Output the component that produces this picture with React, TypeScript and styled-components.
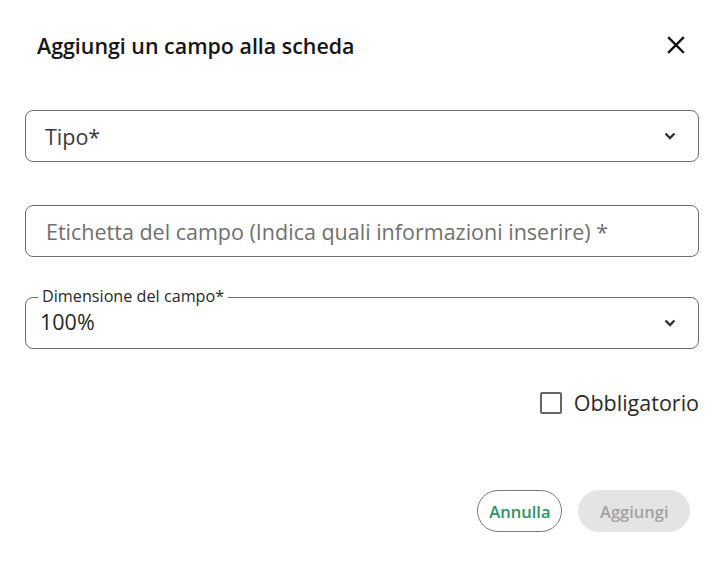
import React from 'react'
import styled, { createGlobalStyle } from 'styled-components'

// -- GLOBAL
const GlobalStyle = createGlobalStyle`
  html, body {
    margin: 0;
    padding: 0;
    background: #ffffff;
    font-family: "Open Sans", "Noto Sans", sans-serif;
    color: #1c1c1c;
  }
`

// -- ICONS
const CloseIcon = () => (
  <svg width="18" height="18" viewBox="0 0 18 18" fill="none">
    <path d="M2 2L16 16M16 2L2 16" stroke="#111" strokeWidth="2.4" strokeLinecap="square" />
  </svg>
)

const Chevron = () => (
  <svg width="12" height="8" viewBox="0 0 12 8" fill="none">
    <path d="M1.5 1.5L6 6L10.5 1.5" stroke="#333" strokeWidth="2.4" />
  </svg>
)

// -- COMPONENT
const App: React.FunctionComponent = () => {
  return (
    <>
      <GlobalStyle />
      <Dialog>
        <Header>
          <Title>Aggiungi un campo alla scheda</Title>
          <CloseButton aria-label="Chiudi"><CloseIcon /></CloseButton>
        </Header>

        <Field spacing={50}>
          <Value muted>Tipo*</Value>
          <Chevron />
        </Field>

        <Field spacing={43}>
          <Value placeholder>Etichetta del campo (Indica quali informazioni inserire) *</Value>
        </Field>

        <Field spacing={40} outlined>
          <Legend>Dimensione del campo*</Legend>
          <Value filled>100%</Value>
          <Chevron />
        </Field>

        <CheckRow>
          <CheckBox />
          <CheckLabel>Obbligatorio</CheckLabel>
        </CheckRow>

        <Actions>
          <Button>Annulla</Button>
          <Button disabled primary>Aggiungi</Button>
        </Actions>
      </Dialog>
    </>
  )
}

// -- UI
const Dialog = styled.div`
  width: 723px;
  height: 567px;
  box-sizing: border-box;
  padding: 30px 24px 0 25px;
  display: flex;
  flex-direction: column;
`

const Header = styled.div`
  display: flex;
  align-items: center;
  justify-content: space-between;
  height: 30px;
  padding-left: 12px;
`

const Title = styled.h2`
  margin: 0;
  font-size: 21.4px;
  font-weight: 600;
  color: #161616;
`

const CloseButton = styled.button`
  border: none;
  background: none;
  padding: 0;
  margin-right: 14px;
  display: flex;
  cursor: pointer;
`

const Field = styled.div<{ outlined?: boolean; spacing: number }>`
  position: relative;
  margin-top: ${p => p.spacing}px;
  height: 52px;
  box-sizing: border-box;
  border: 1px solid #6f6f6f;
  border-radius: 8px;
  display: flex;
  align-items: center;
  justify-content: space-between;
  padding: 0 22px 0 ${p => (p.outlined ? '14px' : '19px')};
`

const Value = styled.span<{ muted?: boolean; placeholder?: boolean; filled?: boolean }>`
  font-size: 21.5px;
  color: ${p => (p.placeholder ? '#707070' : p.filled ? '#262626' : '#3a3a3a')};
  ${p => p.placeholder && 'padding-left: 1px;'}
  ${p => p.filled && 'margin-top: -4px;'}
`

const Legend = styled.span`
  position: absolute;
  top: -12px;
  left: 12px;
  padding: 0 4px;
  background: #fff;
  font-size: 16.2px;
  color: #2a2a2a;
  line-height: 20px;
`

const CheckRow = styled.div`
  margin-top: 39px;
  display: flex;
  align-items: center;
  justify-content: flex-end;
  gap: 12px;
`

const CheckBox = styled.span`
  width: 18px;
  height: 18px;
  border: 2px solid #666;
  border-radius: 2px;
`

const CheckLabel = styled.span`
  font-size: 21.5px;
  color: #2b2b2b;
`

const Actions = styled.div`
  margin-top: 73px;
  display: flex;
  justify-content: flex-end;
  gap: 16px;
  padding-right: 9px;
`

const Button = styled.button<{ primary?: boolean }>`
  height: 42px;
  border-radius: 21px;
  font-family: "Open Sans", sans-serif;
  font-size: 16.5px;
  font-weight: 600;
  padding: 0 ${p => (p.primary ? '21.5px' : '11px')};
  border: ${p => (p.primary ? 'none' : '1px solid #7a7a7a')};
  background: ${p => (p.primary ? '#e4e4e4' : '#fff')};
  color: ${p => (p.primary ? '#a2a2a2' : '#2c9466')};
`

export default App
